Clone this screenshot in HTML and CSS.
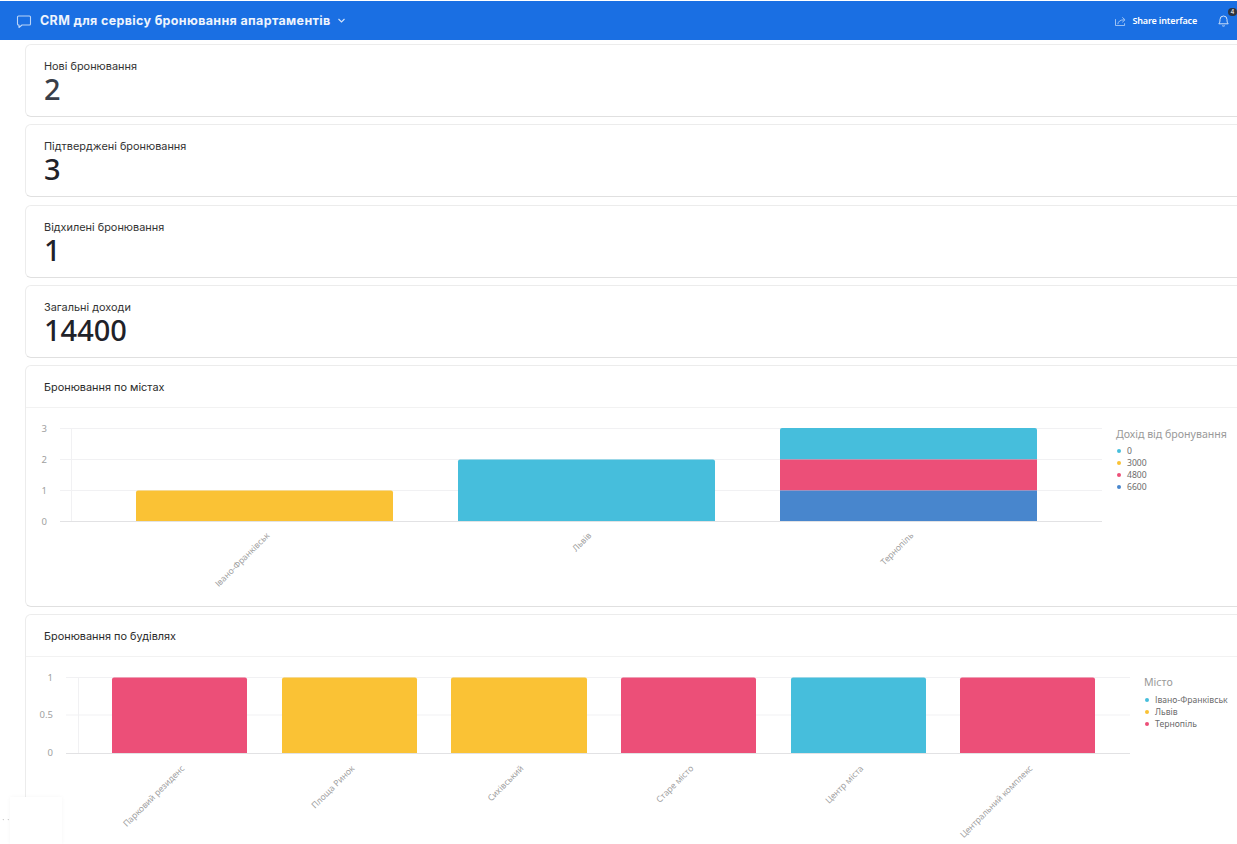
FILE: index.html
```html
<!DOCTYPE html>
<html lang="uk">
<head>
    <meta charset="UTF-8">
    <meta name="viewport" content="width=device-width, initial-scale=1.0">
    <title>CRM для сервісу бронювання апартаментів</title>
    <link rel="stylesheet" href="styles.css">
</head>
<body>
    <header class="topbar">
        <svg class="topbar-icon" width="16" height="16" viewBox="0 0 16 16" fill="none" stroke="#bcd5f8" stroke-width="1.1" stroke-linejoin="round">
            <path d="M2.500 3h11a1 1 0 0 1 1 1v7a1 1 0 0 1-1 1H6L3 14.500V12H2.500a1 1 0 0 1-1-1V4a1 1 0 0 1 1-1z"/>
        </svg>
        <div class="topbar-title">CRM для сервісу бронювання апартаментів</div>
        <svg class="topbar-caret" width="9" height="9" viewBox="0 0 9 9" fill="none" stroke="#d5e4fa" stroke-width="1.1">
            <path d="M1.500 3l3 3 3-3"/>
        </svg>
        <div class="topbar-right">
            <svg class="share-icon" width="11" height="10" viewBox="0 0 12 11" fill="none" stroke="#bcd5f8" stroke-width="0.9">
                <path d="M.5 3.500v7h10V8"/>
                <path d="M3 9c.4-3 2.800-4.800 7-4.800M8 1.500l3 2.700-3 2.700"/>
            </svg>
            <span class="share-label">Share interface</span>
            <div class="bell">
                <svg width="11" height="13" viewBox="0 0 11 13" fill="none" stroke="#e3edfc" stroke-width="0.9">
                    <path d="M.8 9.800c.9-.9 1.200-2 1.200-4.300a3.500 3.500 0 0 1 7 0c0 2.300.3 3.400 1.200 4.300z"/>
                    <path d="M4.200 11.600c.6.600 2 .6 2.600 0"/>
                </svg>
                <span class="badge">4</span>
            </div>
        </div>
    </header>

    <main class="content">
        <section class="card stat">
            <div class="stat-label">Нові бронювання</div>
            <div class="stat-value stat-first">2</div>
        </section>
        <section class="card stat">
            <div class="stat-label">Підтверджені бронювання</div>
            <div class="stat-value">3</div>
        </section>
        <section class="card stat">
            <div class="stat-label">Відхилені бронювання</div>
            <div class="stat-value">1</div>
        </section>
        <section class="card stat">
            <div class="stat-label">Загальні доходи</div>
            <div class="stat-value">14400</div>
        </section>

        <section class="card chart-card">
            <div class="chart-head">Бронювання по містах</div>
            <div class="chart-body">
                <svg class="chart" width="1090" height="197">
                    <g class="grid">
                        <path d="M34 20.500H1076M34 51.500H1076M34 82.500H1076M45.500 20V113"/>
                    </g>
                    <path class="axis" d="M34 113.500H1076"/>
                    <g class="ticks">
                        <text x="21" y="24">3</text>
                        <text x="21" y="55">2</text>
                        <text x="21" y="86">1</text>
                        <text x="21" y="117">0</text>
                    </g>
                    <path fill="#fac235" d="M110 113V84.500Q110 82.500 112 82.500H365Q367 82.500 367 84.500V113Z"/>
                    <path fill="#46bedc" d="M432 113V53.500Q432 51.500 434 51.500H687Q689 51.500 689 53.500V113Z"/>
                    <path fill="#46bedc" d="M754 51.500V22Q754 20 756 20H1009Q1011 20 1011 22V51.500Z"/>
                    <rect fill="#ec4f78" x="754" y="51.500" width="257" height="31"/>
                    <rect fill="#4886cd" x="754" y="82.500" width="257" height="30.500"/>
                    <g class="xlabels">
                        <text transform="translate(244 128) rotate(-45)">Івано-Франківськ</text>
                        <text transform="translate(566 128) rotate(-45)">Львів</text>
                        <text transform="translate(888 128) rotate(-45)">Тернопіль</text>
                    </g>
                </svg>
                <div class="legend legend-revenue">
                    <div class="legend-title">Дохід від бронування</div>
                    <div class="legend-item"><i class="dot dot-cyan"></i>0</div>
                    <div class="legend-item"><i class="dot dot-yellow"></i>3000</div>
                    <div class="legend-item"><i class="dot dot-pink"></i>4800</div>
                    <div class="legend-item"><i class="dot dot-blue"></i>6600</div>
                </div>
            </div>
        </section>

        <section class="card chart-card">
            <div class="chart-head">Бронювання по будівлях</div>
            <div class="chart-body">
                <svg class="chart" width="1118" height="197">
                    <g class="grid">
                        <path d="M40 20.500H1104M40 58H1104M52.500 20V96"/>
                    </g>
                    <path class="axis" d="M40 96.500H1104"/>
                    <g class="ticks">
                        <text x="27" y="24">1</text>
                        <text x="27" y="61">0.5</text>
                        <text x="27" y="99">0</text>
                    </g>
                    <path fill="#ec4f78" d="M86 96V22.500Q86 20.500 88 20.500H219Q221 20.500 221 22.500V96Z"/>
                    <path fill="#fac235" d="M256 96V22.500Q256 20.500 258 20.500H389Q391 20.500 391 22.500V96Z"/>
                    <path fill="#fac235" d="M425 96V22.500Q425 20.500 427 20.500H559Q561 20.500 561 22.500V96Z"/>
                    <path fill="#ec4f78" d="M595 96V22.500Q595 20.500 597 20.500H728Q730 20.500 730 22.500V96Z"/>
                    <path fill="#46bedc" d="M765 96V22.500Q765 20.500 767 20.500H898Q900 20.500 900 22.500V96Z"/>
                    <path fill="#ec4f78" d="M934 96V22.500Q934 20.500 936 20.500H1067Q1069 20.500 1069 22.500V96Z"/>
                    <g class="xlabels">
                        <text transform="translate(159 112) rotate(-45)">Парковий резиденс</text>
                        <text transform="translate(329 112) rotate(-45)">Площа Ринок</text>
                        <text transform="translate(498 112) rotate(-45)">Сихівський</text>
                        <text transform="translate(668 112) rotate(-45)">Старе місто</text>
                        <text transform="translate(838 112) rotate(-45)">Центр міста</text>
                        <text transform="translate(1007 112) rotate(-45)">Центральний комплекс</text>
                    </g>
                </svg>
                <div class="legend legend-city">
                    <div class="legend-title">Місто</div>
                    <div class="legend-item"><i class="dot dot-cyan"></i>Івано-Франківськ</div>
                    <div class="legend-item"><i class="dot dot-yellow"></i>Львів</div>
                    <div class="legend-item"><i class="dot dot-pink"></i>Тернопіль</div>
                </div>
            </div>
        </section>
    </main>

    <div class="corner-patch"></div>
    <div class="corner-dots">· ·</div>
</body>
</html>
```

FILE: styles.css
```css
html, body {
    margin: 0;
    height: 100%;
    overflow: hidden;
}
body {
    background: #fff;
    font-family: Inter, "Noto Sans", sans-serif;
    color: #222;
}

.topbar {
    height: 39px;
    margin-top: 1px;
    background: #1a6fe3;
    display: flex;
    align-items: center;
    padding-left: 16px;
    color: #fff;
}
.topbar-icon {
    margin-right: 8px;
}
.topbar-title {
    font-size: 12.500px;
    font-weight: 700;
    letter-spacing: 0.35px;
    color: #eef4fd;
}
.topbar-caret {
    margin-left: 6px;
}
.topbar-right {
    margin-left: auto;
    display: flex;
    align-items: center;
    padding-right: 8px;
}
.share-icon {
    margin-top: 1px;
}
.share-label {
    font-family: "Noto Sans", sans-serif;
    font-size: 9px;
    font-weight: 600;
    letter-spacing: -0.15px;
    margin: 0 21px 0 6px;
}
.bell {
    position: relative;
    display: flex;
}
.badge {
    position: absolute;
    top: -6px;
    right: -8px;
    width: 9px;
    height: 8px;
    border-radius: 4px;
    background: #2e3440;
    color: #fff;
    font-size: 6px;
    line-height: 8px;
    text-align: center;
}

.content {
    width: 1300px;
    padding: 4px 0 0 25px;
    display: flex;
    flex-direction: column;
}
.card {
    background: #fff;
    border: 1px solid #ececec;
    border-bottom-color: #e0e0e0;
    border-radius: 6px;
    box-sizing: border-box;
    margin-bottom: 7.250px;
    flex: none;
}
.stat {
    height: 73px;
    padding: 15px 18px 0;
}
.stat-label {
    font-size: 10.900px;
    line-height: 13px;
    color: #333;
}
.stat-value {
    font-family: "Noto Sans", sans-serif;
    font-size: 29px;
    font-weight: 500;
    line-height: 32px;
    color: #1f2229;
}
.stat-first {
    color: #393e49;
}

.chart-card {
    height: 241.500px;
}
.chart-head {
    height: 42px;
    padding-left: 18px;
    border-bottom: 1px solid #f2f2f2;
    box-sizing: border-box;
    font-size: 10.900px;
    line-height: 43px;
    color: #2a2a2a;
}
.chart-body {
    display: flex;
    align-items: flex-start;
}
.chart {
    display: block;
    flex: none;
}
.chart text {
    font-family: "Noto Sans", sans-serif;
    font-size: 9.500px;
    fill: #a0a0a0;
}
.grid path {
    fill: none;
    stroke: #f1f1f3;
}
.axis {
    fill: none;
    stroke: #e2e2e4;
}
.ticks text {
    text-anchor: end;
}
.chart .xlabels text {
    text-anchor: end;
    font-size: 8.600px;
}

.legend {
    font-family: "Noto Sans", sans-serif;
    font-size: 8.600px;
    color: #6b6b6b;
}
.legend-revenue {
    padding-top: 18px;
}
.legend-city {
    padding-top: 17px;
}
.legend-city .legend-title {
    margin-bottom: 4px;
}
.legend-title {
    font-size: 10.600px;
    line-height: 16px;
    margin-bottom: 3px;
    color: #999;
    white-space: nowrap;
}
.legend-item {
    display: flex;
    align-items: center;
    height: 12px;
    white-space: nowrap;
}
.dot {
    width: 4px;
    height: 4px;
    border-radius: 50%;
    margin: 0 6px 0 1px;
}
.dot-cyan { background: #46bedc; }
.dot-yellow { background: #fac235; }
.dot-pink { background: #ec4f78; }
.dot-blue { background: #4886cd; }

.corner-patch {
    position: fixed;
    left: 10px;
    top: 797px;
    width: 52px;
    height: 47px;
    background: #fff;
    box-shadow: 0 0 4px rgba(0, 0, 0, 0.04);
}
.corner-dots {
    position: fixed;
    left: 2px;
    top: 814px;
    font-size: 9px;
    color: #bbb;
}
```
